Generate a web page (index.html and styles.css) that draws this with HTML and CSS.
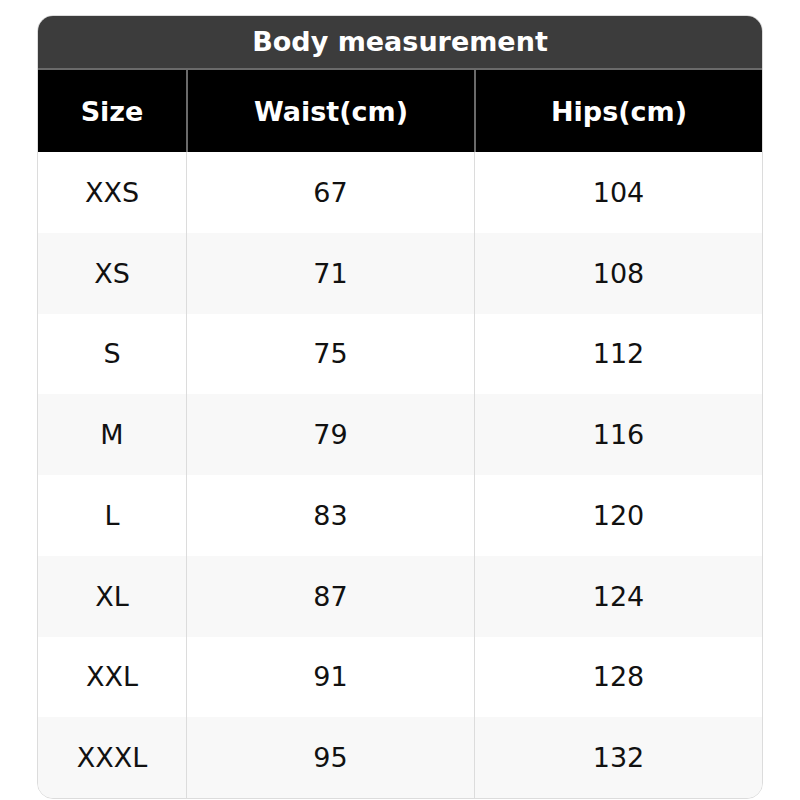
FILE: index.html
```html
<!DOCTYPE html>
<html>
<head>
<meta charset="utf-8">
<link rel="stylesheet" href="styles.css">
</head>
<body>
<div class="card">
  <div class="title">Body measurement</div>
  <div class="grid head">
    <div class="cell">Size</div>
    <div class="cell">Waist(cm)</div>
    <div class="cell">Hips(cm)</div>
  </div>
  <div class="grid row"><div class="cell">XXS</div><div class="cell">67</div><div class="cell">104</div></div>
  <div class="grid row alt"><div class="cell">XS</div><div class="cell">71</div><div class="cell">108</div></div>
  <div class="grid row"><div class="cell">S</div><div class="cell">75</div><div class="cell">112</div></div>
  <div class="grid row alt"><div class="cell">M</div><div class="cell">79</div><div class="cell">116</div></div>
  <div class="grid row"><div class="cell">L</div><div class="cell">83</div><div class="cell">120</div></div>
  <div class="grid row alt"><div class="cell">XL</div><div class="cell">87</div><div class="cell">124</div></div>
  <div class="grid row"><div class="cell">XXL</div><div class="cell">91</div><div class="cell">128</div></div>
  <div class="grid row alt"><div class="cell">XXXL</div><div class="cell">95</div><div class="cell">132</div></div>
</div>
</body>
</html>
```
FILE: styles.css
```css
html, body {
  margin: 0;
  padding: 0;
  background: #ffffff;
}
body {
  padding: 15px 37px 0 37px;
  font-family: "DejaVu Sans", sans-serif;
  font-size: 27px;
  color: #111;
}
.card {
  width: 726px;
  box-sizing: border-box;
  border: 1px solid #dcdcdc;
  border-radius: 16px;
  overflow: hidden;
}
.title {
  height: 54px;
  background: #3c3c3c;
  color: #fff;
  font-weight: bold;
  display: flex;
  align-items: center;
  justify-content: center;
  border-bottom: 2px solid #6a6a6a;
  box-sizing: border-box;
  padding-bottom: 2px;
}
.grid {
  display: grid;
  grid-template-columns: 148px 288px 1fr;
}
.cell {
  display: flex;
  align-items: center;
  justify-content: center;
}
.cell + .cell {
  border-left: 1px solid #dcdcdc;
}
.head {
  height: 82px;
  background: #000;
  color: #fff;
  font-weight: bold;
}
.head .cell + .cell {
  border-left: 2px solid #6a6a6a;
}
.row {
  height: 80.75px;
  background: #fff;
}
.row.alt {
  background: #f8f8f8;
}
```
